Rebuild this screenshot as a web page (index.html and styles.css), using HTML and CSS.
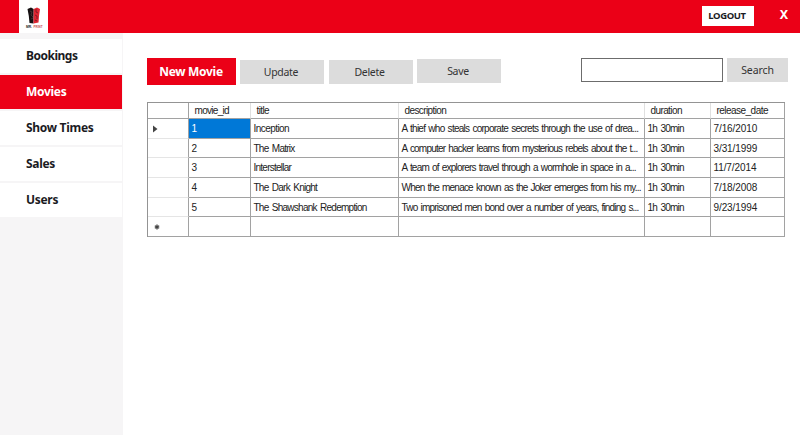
FILE: index.html
```html
<!DOCTYPE html>
<html lang="en">
<head>
<meta charset="utf-8">
<title>Movies</title>
<link rel="stylesheet" href="styles.css">
</head>
<body>
<header class="topbar">
  <div class="logo">
    <svg width="29" height="33" viewBox="0 0 29 33">
      <path d="M8.500 9 L12 7.500 L14.700 9 L14.500 23.500 L10.500 23 L9.800 16Z" fill="#161012"/>
      <path d="M14.700 9 L18 7.500 L21 9 L20 16 L19.500 22.500 L14.500 23.500Z" fill="#df2431"/>
      <path d="M11 11l2 1-1 3 2 2M12 19l2-1" fill="none" stroke="#5c4547" stroke-width=".6"/>
      <path d="M17 9v3l2 1M16 15l2 1v3M16 20l2 1" fill="none" stroke="#671c23" stroke-width=".8"/>
      <text class="logo-text" x="7" y="28" textLength="6" lengthAdjust="spacingAndGlyphs" fill="#222">MR.</text>
      <text class="logo-text" x="14.500" y="28" textLength="9" lengthAdjust="spacingAndGlyphs" fill="#c84b52">PRINT</text>
    </svg>
  </div>
  <button class="logout">LOGOUT</button>
  <button class="close">X</button>
</header>
<div class="body">
  <nav class="sidebar">
    <a class="nav-item bookings">Bookings</a>
    <a class="nav-item active">Movies</a>
    <a class="nav-item">Show Times</a>
    <a class="nav-item">Sales</a>
    <a class="nav-item">Users</a>
  </nav>
  <main class="content">
    <div class="toolbar">
      <button class="btn primary">New Movie</button>
      <button class="btn update">Update</button>
      <button class="btn delete">Delete</button>
      <button class="btn save">Save</button>
      <input class="search-box" type="text" aria-label="Search">
      <button class="btn search">Search</button>
    </div>
    <div class="grid">
      <div class="row head"><div class="cell"></div><div class="cell h-id">movie_id</div><div class="cell">title</div><div class="cell">description</div><div class="cell">duration</div><div class="cell h-date">release_date</div></div>
      <div class="row"><div class="cell mark"><svg width="5" height="8"><path d="M0 0.500L4.500 4L0 7.500Z" fill="#444"/></svg></div><div class="cell selected">1</div><div class="cell">Inception</div><div class="cell desc wide">A thief who steals corporate secrets through the use of drea...</div><div class="cell dur">1h 30min</div><div class="cell date">7/16/2010</div></div>
      <div class="row"><div class="cell"></div><div class="cell">2</div><div class="cell title">The Matrix</div><div class="cell desc">A computer hacker learns from mysterious rebels about the t...</div><div class="cell dur">1h 30min</div><div class="cell date">3/31/1999</div></div>
      <div class="row"><div class="cell"></div><div class="cell">3</div><div class="cell title">Interstellar</div><div class="cell desc">A team of explorers travel through a wormhole in space in a...</div><div class="cell dur">1h 30min</div><div class="cell date">11/7/2014</div></div>
      <div class="row"><div class="cell"></div><div class="cell">4</div><div class="cell title">The Dark Knight</div><div class="cell desc">When the menace known as the Joker emerges from his my...</div><div class="cell dur">1h 30min</div><div class="cell date">7/18/2008</div></div>
      <div class="row"><div class="cell"></div><div class="cell">5</div><div class="cell title">The Shawshank Redemption</div><div class="cell desc">Two imprisoned men bond over a number of years, finding s...</div><div class="cell dur">1h 30min</div><div class="cell date">9/23/1994</div></div>
      <div class="row"><div class="cell mark new"><svg width="6" height="6"><path d="M3 .5v5M.8 1.700l4.400 2.600M.8 4.300l4.400-2.600" stroke="#444" stroke-width="1.300"/></svg></div><div class="cell"></div><div class="cell"></div><div class="cell"></div><div class="cell"></div><div class="cell"></div></div>
    </div>
  </main>
</div>
</body>
</html>
```
FILE: styles.css
```css
* { box-sizing: border-box; }
body { margin: 0; width: 800px; height: 435px; overflow: hidden; background: #fff; font-family: "Noto Sans", sans-serif; color: #1b1b1f; }
button { border: 0; padding: 0; font-family: inherit; color: inherit; }
.topbar { display: flex; height: 33px; background: #eb0017; }
.logo { width: 29px; height: 33px; margin-left: 19px; background: #fff; }
.logo svg { display: block; }
.logo-text { font: bold 3.5px "Liberation Sans", sans-serif; }
.logout { width: 52px; height: 20px; margin: 6px 0 0 654px; background: #fff; font-size: 9.5px; font-weight: 700; line-height: 20px; padding-right: 2px; letter-spacing: -.4px; }
.close { width: 20px; height: 20px; margin: 5px 0 0 20px; background: none; color: #fff; font-size: 12.5px; font-weight: 700; line-height: 20px; }
.body { display: flex; height: 402px; }
.sidebar { width: 123px; padding: 6px 1px 0 0; background: #f6f5f6; display: flex; flex-direction: column; gap: 2px; }
.nav-item { height: 34px; padding-left: 26px; background: #fff; font-size: 12px; font-weight: 700; line-height: 33px; letter-spacing: -.3px; white-space: nowrap; }
.bookings { letter-spacing: -.5px; }
.nav-item.active { background: #eb0017; color: #fff; }
.content { padding: 25px 0 0 24px; width: 677px; }
.toolbar { display: flex; height: 27px; align-items: flex-start; }
.btn { width: 84px; height: 24px; background: #dcdcdc; color: #333; font-size: 10.5px; line-height: 24px; letter-spacing: -.3px; }
.primary { width: 89px; height: 27px; background: #eb0017; color: #fff; font-size: 12px; font-weight: 700; line-height: 27px; padding-right: 1px; }
.update { margin: 2px 0 0 4px; padding-right: 2px; }
.delete { margin: 2px 0 0 5px; padding-right: 3px; }
.save { margin: 1px 0 0 4px; padding-right: 2px; }
.search-box { width: 142px; height: 24px; margin-left: 80px; border: 1px solid #6c6c6c; background: #fff; padding: 0 4px; outline: 0; }
.search { width: 61px; margin-left: 4px; letter-spacing: -.1px; }
.grid { width: 638px; margin-top: 17px; border: 1px solid #949494; border-width: 1px 0 0 1px; font: 10px "Liberation Sans", Arial, sans-serif; color: #222; }
.row { display: grid; grid-template-columns: 41px 62px 148px 246px 66px 74px; height: 19.7px; }
.row.head { height: 16px; }
.cell { border: 1px solid #a2a2a2; border-width: 0 1px 1px 0; padding-left: 2.5px; line-height: 19px; letter-spacing: -.55px; white-space: nowrap; overflow: hidden; }
.cell.title { letter-spacing: -.75px; word-spacing: 1.3px; }
.cell.desc { letter-spacing: -.8px; word-spacing: 1.1px; }
.cell.desc.wide { letter-spacing: -.74px; }
.cell.dur { letter-spacing: -.8px; word-spacing: 1.5px; }
.cell.date { letter-spacing: -.1px; }
.cell:first-child { border-bottom-color: #e5e5e5; }
.row:last-child .cell:first-child, .head .cell:first-child { border-bottom-color: #a2a2a2; }
.head .cell { padding-left: 5.5px; line-height: 16px; border-right-color: #e0e0e0; letter-spacing: -.6px; }
.head .cell.h-id { letter-spacing: -.7px; }
.head .cell.h-date { letter-spacing: -.53px; }
.head .cell:first-child, .head .cell:last-child { border-right-color: #a2a2a2; }
.cell.mark { padding: 6px 0 0 5px; line-height: 0; }
.cell.new { padding: 7px 0 0 6px; }
.cell.selected { background: #0078d7; color: #fff; }
```
